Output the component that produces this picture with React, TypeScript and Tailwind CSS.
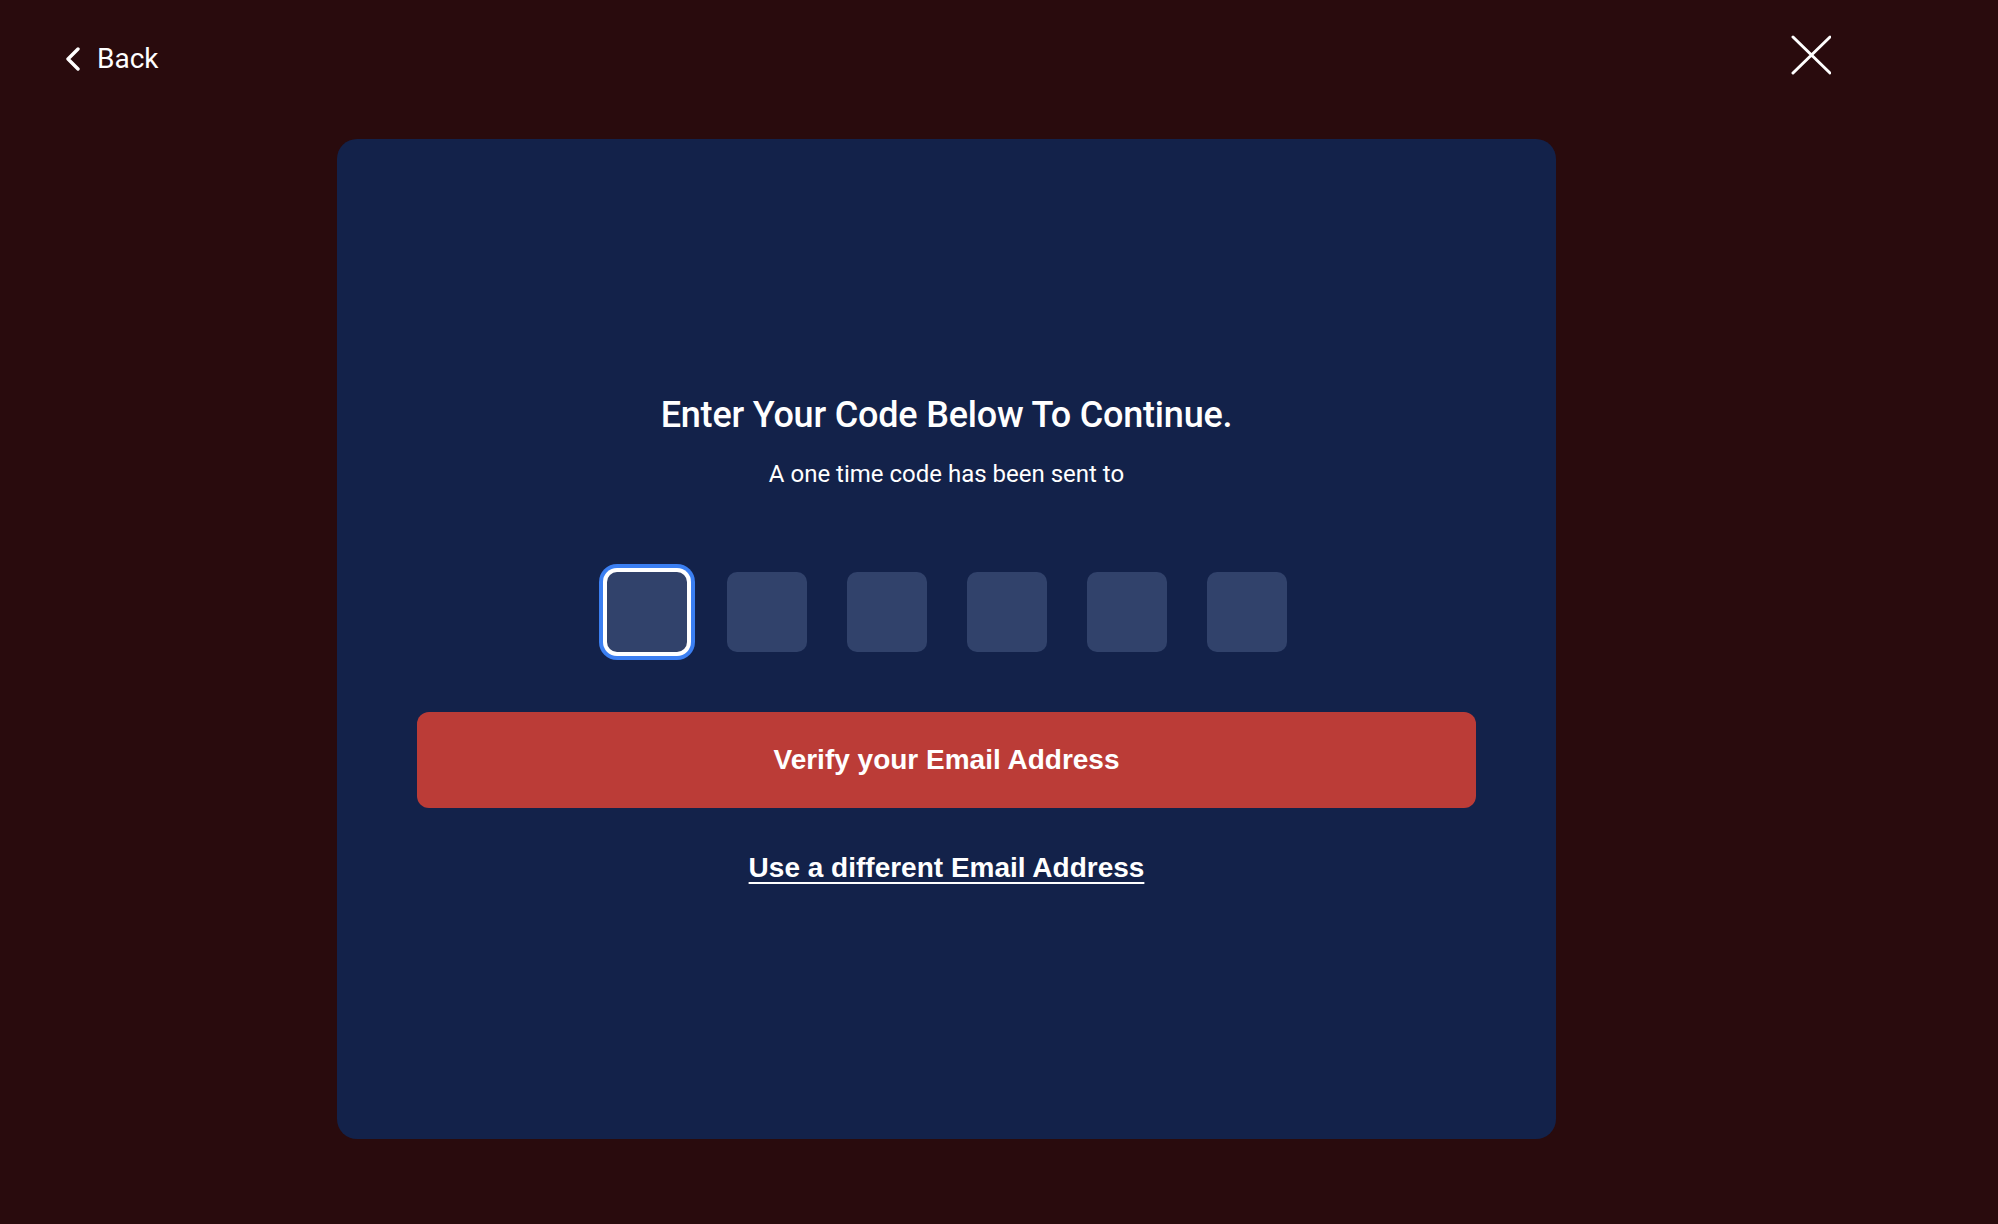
const CodeBox = ({ active }: { active?: boolean }) => (
  <div
    className={`w-20 h-20 rounded-[10px] bg-[#31426b] ${
      active ? "shadow-[0_0_0_4px_#ffffff,0_0_0_8px_#3b7ff2]" : ""
    }`}
  />
);

const App = () => {
  const boxes = [0, 1, 2, 3, 4, 5];

  return (
    <div className="w-[1998px] h-[1224px] bg-[#290b0d] text-white font-['Roboto',sans-serif] overflow-hidden">
      {/* top bar */}
      <div className="flex justify-between items-start pt-[35px] pl-[65px] pr-[167px] h-[139px]">
        <button className="flex items-center gap-[16px] mt-[8px] h-8 text-white">
          <svg width="16" height="24" viewBox="0 0 16 24" fill="none">
            <polyline
              points="13,2 3,12 13,22"
              stroke="white"
              strokeWidth="3.4"
              strokeLinecap="round"
              strokeLinejoin="round"
            />
          </svg>
          <span className="text-[28px] leading-8">Back</span>
        </button>
        <button>
          <svg width="40" height="40" viewBox="0 0 40 40" fill="none">
            <path
              d="M2 2L39 38M39 2L2 38"
              stroke="white"
              strokeWidth="3"
              strokeLinecap="round"
            />
          </svg>
        </button>
      </div>

      {/* card */}
      <div className="ml-[337px] w-[1219px] h-[1000px] rounded-[20px] bg-[#13224a] px-20 pb-[6px] flex flex-col items-center justify-center">
        <h1 className="mt-[6px] text-[36px] leading-10 font-medium tracking-[-0.2px]">
          Enter Your Code Below To Continue.
        </h1>
        <p className="mt-[23px] text-[24px] leading-8">
          A one time code has been sent to
        </p>
        <div className="mt-[82px] flex gap-10">
          {boxes.map((i) => (
            <CodeBox key={i} active={i === 0} />
          ))}
        </div>
        <button className="mt-[60px] w-full h-24 rounded-xl bg-[#bb3c37] font-['Liberation_Sans',Arial,sans-serif] font-bold text-[28px] text-white">
          Verify your Email Address
        </button>
        <a
          href="#"
          className="mt-[44px] font-['Liberation_Sans',Arial,sans-serif] font-bold text-[28px] leading-8 underline underline-offset-[5px] decoration-2"
        >
          Use a different Email Address
        </a>
      </div>
    </div>
  );
};

export default App;
